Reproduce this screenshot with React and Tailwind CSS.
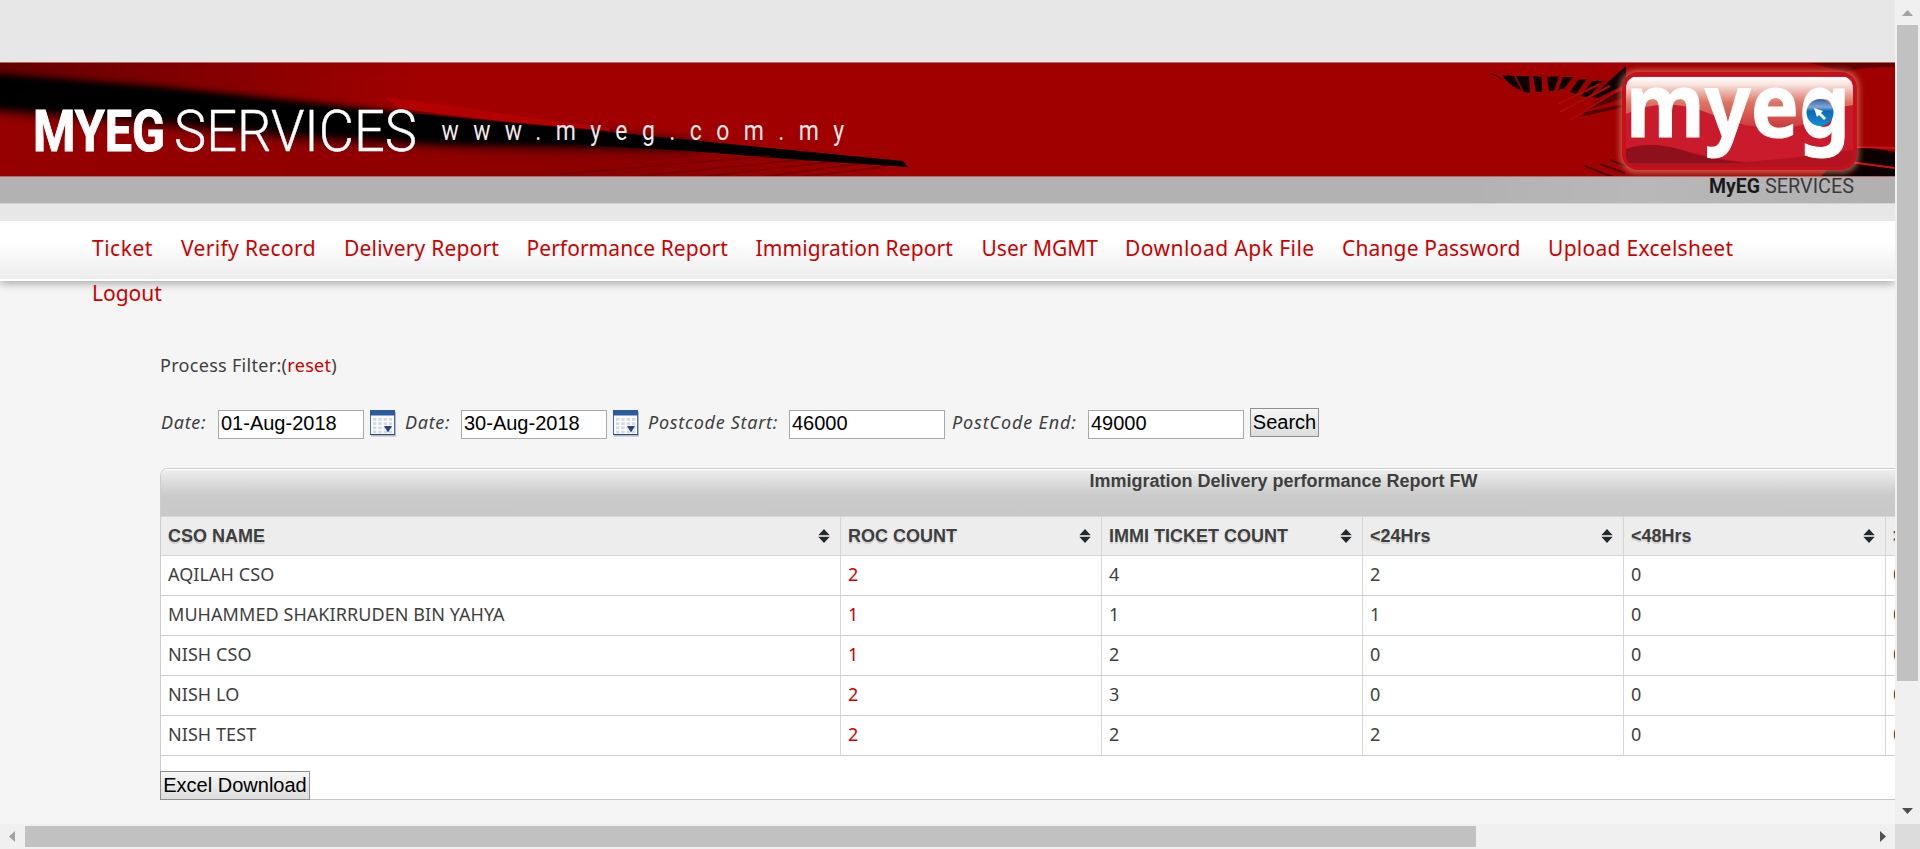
import React from "react";

const NAV = [
  { label: "Ticket", cls: "w-[89px] tracking-[0.5px]" },
  { label: "Verify Record", cls: "w-[163px] tracking-[0.35px]" },
  { label: "Delivery Report", cls: "w-[182.5px] tracking-[0.2px]" },
  { label: "Performance Report", cls: "w-[229px] tracking-[0.05px]" },
  { label: "Immigration Report", cls: "w-[226px] tracking-[0.1px]" },
  { label: "User MGMT", cls: "w-[143.5px]" },
  { label: "Download Apk File", cls: "w-[217px] tracking-[0.45px]" },
  { label: "Change Password", cls: "w-[206px] tracking-[0.15px]" },
  { label: "Upload Excelsheet", cls: "w-[215px] tracking-[0.28px]" },
  { label: "Logout", cls: "w-[90px]" },
];

const COLUMNS = [
  { label: "CSO NAME", width: "w-[680px]" },
  { label: "ROC COUNT", width: "w-[261px]" },
  { label: "IMMI TICKET COUNT", width: "w-[261px]" },
  { label: "<24Hrs", width: "w-[261px]" },
  { label: "<48Hrs", width: "w-[262px]" },
  { label: ">48Hrs", width: "w-[261px]" },
];

const ROWS = [
  ["AQILAH CSO", "2", "4", "2", "0", "0"],
  ["MUHAMMED SHAKIRRUDEN BIN YAHYA", "1", "1", "1", "0", "0"],
  ["NISH CSO", "1", "2", "0", "0", "0"],
  ["NISH LO", "2", "3", "0", "0", "0"],
  ["NISH TEST", "2", "2", "2", "0", "0"],
];

function Banner() {
  return (
    <svg width="1895" height="221" viewBox="0 0 1895 221" className="relative z-10 block shrink-0">
      <defs>
        <linearGradient id="leftRed" x1="0" x2="1" y1="0" y2="0">
          <stop offset="0" stopColor="#650000" />
          <stop offset="0.5" stopColor="#850000" />
          <stop offset="1" stopColor="#a00000" />
        </linearGradient>
        <linearGradient id="lowRed" x1="0" x2="1" y1="0" y2="0">
          <stop offset="0" stopColor="#960000" />
          <stop offset="0.7" stopColor="#8c0000" />
          <stop offset="1" stopColor="#a00000" />
        </linearGradient>
        <linearGradient id="gloss" x1="0" x2="0" y1="0" y2="1">
          <stop offset="0" stopColor="#fff" />
          <stop offset="0.15" stopColor="#f9e4de" />
          <stop offset="0.5" stopColor="#dd7564" />
          <stop offset="1" stopColor="#cc3a3c" />
        </linearGradient>
        <linearGradient id="ball" x1="0" x2="0" y1="0" y2="1">
          <stop offset="0" stopColor="#3b5fa8" />
          <stop offset="0.3" stopColor="#7fa6d8" />
          <stop offset="0.45" stopColor="#0b6ab5" />
          <stop offset="1" stopColor="#1390d2" />
        </linearGradient>
        <linearGradient id="greyEnd" x1="0" x2="1" y1="0" y2="0">
          <stop offset="0" stopColor="#b2b2b2" />
          <stop offset="0.4" stopColor="#b8b8b8" />
          <stop offset="1" stopColor="#b0b0b0" />
        </linearGradient>
        <filter id="b1" x="-10%" y="-50%" width="120%" height="200%"><feGaussianBlur stdDeviation="0.7" /></filter>
        <filter id="b3" x="-10%" y="-50%" width="120%" height="200%"><feGaussianBlur stdDeviation="3" /></filter>
        <filter id="b6" x="-10%" y="-50%" width="120%" height="200%"><feGaussianBlur stdDeviation="6" /></filter>
        <clipPath id="strip"><rect x="0" y="63" width="1895" height="113" /></clipPath>
        <clipPath id="badge"><rect x="1626" y="76" width="227" height="91" rx="12" /></clipPath>
      </defs>
      <rect width="1895" height="221" fill="#e7e7e7" />
      <rect y="62" width="1895" height="115" fill="#b06a6a" />
      <rect y="63" width="1895" height="113" fill="#a00000" />
      <g clipPath="url(#strip)">
        <rect y="63" width="420" height="60" fill="url(#leftRed)" />
        <path d="M0 100L600 142L905 168L905 180L0 180Z" fill="url(#lowRed)" />
        <path d="M-30 74L160 90L300 106L480 124L700 143L700 149L480 146L300 138L160 124L-30 108Z" fill="#000" filter="url(#b6)" />
        <path d="M-40 73L160 88L300 102L440 118L610 132L610 143L440 142L300 129L160 114L-40 104Z" fill="#050000" filter="url(#b3)" />
        <path d="M385 97L440 104L520 116L610 128L610 131L500 121L440 114L400 108Z" fill="#b30000" filter="url(#b1)" />
        <path d="M390 111L500 122L640 135L780 149L903 161L908 167L800 160L690 151L600 146L480 138L400 126Z" fill="#050000" filter="url(#b1)" />
        <g stroke="#6b0000" strokeWidth="2" opacity="0.6" fill="none" filter="url(#b1)">
          <path d="M560 174L770 156M640 176L800 160M700 177L830 162M760 177L860 164M800 177L885 167" />
        </g>
        <g fill="#0b0000" filter="url(#b1)">
          <path d="M1490 73L1503 80L1496 75ZM1502 75L1514 76L1522 91Q1508 85 1502 75ZM1516 76L1529 76L1530 93L1524 92ZM1533 76L1542 77L1542 92L1536 92ZM1547 77L1559 76L1554 91L1549 91ZM1563 77L1573 77L1565 88L1558 90ZM1578 80L1587 79L1576 94L1570 92ZM1592 81L1603 81L1588 98L1581 96ZM1608 82L1626 66L1626 84L1598 98L1592 97Z" />
          <path d="M1596 101L1624 90L1624 98L1590 109ZM1586 112L1624 104L1624 107L1580 117Z" opacity="0.5" />
        </g>
        <path d="M1610 86L1560 112M1618 90L1570 120M1600 84L1558 104" stroke="#a80808" strokeWidth="2" filter="url(#b1)" />
        <path d="M1585 166L1625 182M1600 164L1625 173M1610 160L1626 166" stroke="#500" strokeWidth="2" filter="url(#b1)" />
        <path d="M1810 63H1895V67Q1860 67 1846 72Z" fill="#3c0000" opacity="0.6" filter="url(#b1)" />
        <path d="M1855 145L1895 152L1895 177L1820 177Z" fill="#100" filter="url(#b1)" />
        <path d="M1856 147L1895 148M1850 162L1895 168" stroke="#d01010" strokeWidth="2" />
        <rect x="1620" y="70" width="239" height="103" rx="17" fill="#e08a70" opacity="0.7" filter="url(#b3)" />
        <path d="M1640 66H1842" stroke="#bc2a16" strokeWidth="7" filter="url(#b1)" />
      </g>
      <rect x="1622" y="72" width="235" height="98" rx="16" fill="#c8101c" />
      <g clipPath="url(#badge)">
        <rect x="1626" y="76" width="227" height="94" fill="#c91b2b" />
        <path d="M1626 77H1853V105Q1838 107 1830 113Q1800 134 1745 125Q1720 118 1700 110Q1660 98 1626 114Z" fill="url(#gloss)" />
        <path d="M1626 149Q1648 141 1678 149Q1715 159 1745 162Q1800 158 1853 150V172H1626Z" fill="#b3121f" />
        <path d="M1626 149Q1648 141 1678 149Q1710 160 1745 163H1626Z" fill="#8d101c" />
      </g>
      <text x="1626" y="137" fontFamily="Noto Sans, sans-serif" fontWeight="700" fontSize="87" fill="#fff" stroke="#fff" strokeWidth="1" textLength="224" lengthAdjust="spacingAndGlyphs">myeg</text>
      <circle cx="1820" cy="112.5" r="13.5" fill="url(#ball)" />
      <path d="M1814 108L1823 111L1821 113L1826 118L1824 120L1819 115L1817 117Z" fill="#fff" />
      <rect y="177" width="1895" height="26" fill="#b2b2b2" />
      <rect x="1469" y="177" width="426" height="26" fill="url(#greyEnd)" />
      <rect y="203" width="1895" height="1" fill="#d3d3d3" />
      <text x="33" y="150.5" fontFamily="Roboto, sans-serif" fontWeight="700" fontSize="57" fill="#fff" stroke="#fff" strokeWidth="1" textLength="132" lengthAdjust="spacingAndGlyphs">MYEG</text>
      <text x="174" y="150.5" fontFamily="Roboto, sans-serif" fontWeight="300" fontSize="57" fill="#fff" stroke="#fff" strokeWidth="0.4" textLength="243" lengthAdjust="spacingAndGlyphs">SERVICES</text>
      <g transform="translate(441.5 140) scale(0.82 1)">
        <text fontFamily="Roboto, sans-serif" fontSize="28" fill="#f1e8e8" letterSpacing="17.6">www.myeg.com.my</text>
      </g>
      <text x="1709" y="193" fontFamily="Roboto, sans-serif" fontWeight="700" fontSize="20" fill="#1a1a1a" textLength="51" lengthAdjust="spacingAndGlyphs">MyEG</text>
      <text x="1765" y="193" fontFamily="Roboto, sans-serif" fontWeight="400" fontSize="20" fill="#3a3a3a" textLength="89" lengthAdjust="spacingAndGlyphs">SERVICES</text>
    </svg>
  );
}

function CalendarIcon() {
  const dots = [];
  for (let r = 0; r < 4; r++) for (let k = 0; k < 4; k++) dots.push([3 + k * 5.3, 8 + r * 4.2]);
  return (
    <svg width="27" height="27" viewBox="0 0 27 27" className="block shrink-0">
      <rect x="1" y="2" width="25" height="24.5" fill="#b5b9c0" />
      <rect x="0" y="0" width="25" height="25" fill="#4a6ca5" />
      <rect x="1" y="5" width="23" height="19" fill="#fbfcfe" />
      <rect x="0" y="0" width="25" height="5.5" fill="#2c5a9e" />
      <rect x="0" y="24" width="25" height="1" fill="#274a80" />
      {dots.map(([x, y]) => <rect key={x + "-" + y} x={x} y={y} width="3.4" height="2.8" fill="#d3d9e6" />)}
      <path d="M14 16H22L18 22.5Z" fill="#27477c" />
    </svg>
  );
}

function SortIcon() {
  return (
    <svg width="12" height="14" viewBox="0 0 12 14" className="mb-px block shrink-0">
      <path d="M6 0L11.5 6H0.5ZM6 14L0.5 8H11.5Z" fill="#23292b" />
      <path d="M0.5 7H11.5" stroke="#9a9c9d" strokeWidth="1" />
    </svg>
  );
}

const field = "box-border h-[29px] border border-[#a9a9a9] bg-white pl-[2px] pb-[2px] font-['Liberation_Sans',sans-serif] text-[20px] leading-[25px] text-black outline-none";
const button = "box-border border border-[#8f8f8f] bg-linear-to-b from-[#f6f6f6] to-[#dddddd] pb-px text-center font-['Liberation_Sans',sans-serif] text-[20px] leading-[25px] text-black whitespace-nowrap";

function Page() {
  return (
    <div className="flex min-w-0 flex-col overflow-hidden bg-[#f5f5f5] font-['Noto_Sans',sans-serif] text-[#3f3f3f]">
      <Banner />
      <nav className="h-[60px] shrink-0 border-b-2 border-white bg-linear-to-b from-white from-35% to-[#ececec] shadow-[0_2px_9px_rgba(0,0,0,0.35)]">
        <ul className="flex w-[1800px] flex-wrap pt-[5px] pl-[92px] text-[21px] leading-[45px] whitespace-nowrap text-[#cc0000]">
          {NAV.map((n) => <li key={n.label} className={n.cls}>{n.label}</li>)}
        </ul>
      </nav>
      <main className="flex flex-col pt-[72px] pl-[160px] text-[18px]">
        <p className="h-[24px] leading-[24px] tracking-[0.3px]">Process Filter:(<span className="text-[#cc0000]">reset</span>)</p>
        <form className="mt-[31px] flex h-[31px] items-start">
          <label className="w-[58px] pt-[2px] pl-[1px] leading-[24px] tracking-[0.7px] italic">Date:</label>
          <input className={field + " mt-[2px] w-[146px]"} defaultValue="01-Aug-2018" />
          <span className="w-[41px] pt-[2px] pl-[6px]"><CalendarIcon /></span>
          <label className="w-[56px] pt-[2px] leading-[24px] tracking-[0.7px] italic">Date:</label>
          <input className={field + " mt-[2px] w-[146px]"} defaultValue="30-Aug-2018" />
          <span className="w-[41px] pt-[2px] pl-[6px]"><CalendarIcon /></span>
          <label className="w-[141px] pt-[2px] leading-[24px] tracking-[0.7px] whitespace-nowrap italic">Postcode Start:</label>
          <input className={field + " mt-[2px] w-[156px]"} defaultValue="46000" />
          <label className="w-[143px] pt-[2px] pl-[7px] leading-[24px] tracking-[0.85px] whitespace-nowrap italic">PostCode End:</label>
          <input className={field + " mt-[2px] w-[156px]"} defaultValue="49000" />
          <button type="button" className={button + " ml-[6px] h-[29px] w-[69px]"}>Search</button>
        </form>
        <section className="mt-[29px] flex w-[2246px] flex-col rounded-tl-[8px] border-t border-l border-[#cccccc] bg-white">
          <h2 className="h-[48px] rounded-tl-[7px] border-t border-b border-t-white border-b-[#d8d8d8] bg-linear-to-b from-[#eeeeee] via-[#cacaca] via-55% to-[#c8c8c8] text-center font-['Liberation_Sans',sans-serif] text-[18px] leading-[22px] font-bold">
            Immigration Delivery performance Report FW
          </h2>
          <div className="flex h-[39px] border-b border-[#d5d5d5] bg-[#ededed]">
            {COLUMNS.map((col) => (
              <div key={col.label} className={"flex shrink-0 items-center justify-between border-r border-[#d5d5d5] pr-[10px] pl-[7px] font-['Liberation_Sans',sans-serif] text-[18px] leading-[38px] font-bold whitespace-nowrap [text-shadow:0_2px_1px_#cfcfcf] " + col.width}>
                <span className="-mt-px">{col.label}</span>
                <SortIcon />
              </div>
            ))}
          </div>
          {ROWS.map((row) => (
            <div key={row[0]} className="flex h-[40px] border-b border-[#cccccc]">
              {row.map((v, i) => (
                <div key={i} className={"shrink-0 border-r border-[#d8d8d8] pl-[7px] leading-[36px] tracking-[0.07px] " + COLUMNS[i].width + (i === 1 ? " text-[#cc0000]" : "")}>{v}</div>
              ))}
            </div>
          ))}
          <div className="h-[44px] border-b border-[#c4c4c4] pt-[15px]">
            <button type="button" className={button + " -ml-[1px] block h-[29px] w-[150px]"}>Excel Download</button>
          </div>
        </section>
      </main>
    </div>
  );
}

export default function App() {
  return (
    <div className="grid h-[849px] w-[1920px] grid-cols-[1895px_25px] grid-rows-[824px_25px] overflow-hidden">
      <Page />
      <div className="flex flex-col items-center bg-[#f0f0f0]">
        <svg width="25" height="25" className="block shrink-0"><path d="M7 16L12.5 10L18 16Z" fill="#a3a3a3" /></svg>
        <div className="h-[656px] w-[21px] bg-[#c1c1c1]" />
        <svg width="25" height="25" className="mt-auto block shrink-0"><path d="M7 9L12.5 15L18 9Z" fill="#505050" /></svg>
      </div>
      <div className="flex items-center bg-[#f0f0f0]">
        <svg width="25" height="25" className="block shrink-0"><path d="M15 7L9 12.5L15 18Z" fill="#a3a3a3" /></svg>
        <div className="h-[21px] w-[1451px] bg-[#c1c1c1]" />
        <svg width="25" height="25" className="ml-auto block shrink-0"><path d="M10 7L16 12.5L10 18Z" fill="#505050" /></svg>
      </div>
      <div className="bg-[#dcdcdc]" />
    </div>
  );
}
